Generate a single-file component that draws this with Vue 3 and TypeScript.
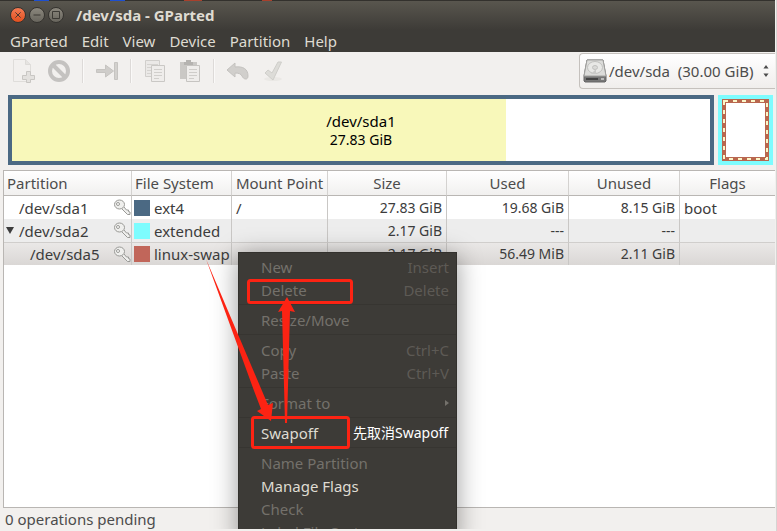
<script setup lang="ts">
interface Partition {
  name: string
  depth: number
  expander: boolean
  fs: string
  mount: string
  size: string
  used: string
  unused: string
  flags: string
}

interface MenuEntry {
  label: string
  accel?: string
  enabled?: boolean
  submenu?: boolean
}

const menus: string[] = ['GParted', 'Edit', 'View', 'Device', 'Partition', 'Help']

const columns: string[] = ['Partition', 'File System', 'Mount Point', 'Size', 'Used', 'Unused', 'Flags']

const partitions: Partition[] = [
  { name: '/dev/sda1', depth: 0, expander: false, fs: 'ext4', mount: '/', size: '27.83 GiB', used: '19.68 GiB', unused: '8.15 GiB', flags: 'boot' },
  { name: '/dev/sda2', depth: 0, expander: true, fs: 'extended', mount: '', size: '2.17 GiB', used: '---', unused: '---', flags: '' },
  { name: '/dev/sda5', depth: 1, expander: false, fs: 'linux-swap', mount: '', size: '2.17 GiB', used: '56.49 MiB', unused: '2.11 GiB', flags: '' },
]

const usedShare: string = `${(19.68 / 27.83) * 100}%`

const groups: MenuEntry[][] = [
  [{ label: 'New', accel: 'Insert' }, { label: 'Delete', accel: 'Delete' }],
  [{ label: 'Resize/Move' }],
  [{ label: 'Copy', accel: 'Ctrl+C' }, { label: 'Paste', accel: 'Ctrl+V' }],
  [{ label: 'Format to', submenu: true }],
  [{ label: 'Swapoff', enabled: true }],
  [{ label: 'Name Partition' }, { label: 'Manage Flags', enabled: true }, { label: 'Check' }, { label: 'Label File System' }],
]
</script>

<template>
  <div class="window">
    <header class="chrome">
      <div class="titlebar">
        <button class="knob close" aria-label="Close">
          <svg viewBox="0 0 16 16"><path d="M5 5l6 6M11 5l-6 6" /></svg>
        </button>
        <button class="knob" aria-label="Minimize">
          <svg viewBox="0 0 16 16"><path d="M4 8h8" /></svg>
        </button>
        <button class="knob" aria-label="Maximize">
          <svg viewBox="0 0 16 16"><path d="M4 4h8v8H4z" /></svg>
        </button>
        <h1>/dev/sda - GParted</h1>
      </div>
      <nav class="menubar">
        <button v-for="m in menus" :key="m">{{ m }}</button>
      </nav>
    </header>

    <div class="toolbar">
      <div class="tools">
        <button class="tool" aria-label="New partition" disabled>
          <svg viewBox="0 0 24 24">
            <path d="M1.5 .5h12l5 5v17h-17z" fill="#f2f0ee" stroke="#dfddda" />
            <path d="M13.500 .5v5h5" fill="#e6e4e1" stroke="#dddbd8" />
            <path d="M14.500 12.500h4v4h4v4h-4v3h-4v-3h-4v-4h4z" fill="#e3e1de" stroke="#c8c6c3" />
          </svg>
        </button>
        <button class="tool" aria-label="Delete partition" disabled>
          <svg viewBox="0 0 24 24">
            <circle cx="12" cy="12" r="9" fill="none" stroke="#c4c2c0" stroke-width="4" />
            <path d="M6 6l12 12" stroke="#c4c2c0" stroke-width="4" />
          </svg>
        </button>
        <span class="rule"></span>
        <button class="tool" aria-label="Resize or move" disabled>
          <svg viewBox="0 0 24 24">
            <path d="M1.5 10.500h9V6l8 6-8 6v-4.500h-9z" fill="#cfcdca" stroke="#c6c4c1" stroke-linejoin="round" />
            <path d="M19.500 3.500h3v17h-3z" fill="#d3d1ce" stroke="#c6c4c1" />
          </svg>
        </button>
        <span class="rule"></span>
        <button class="tool" aria-label="Copy" disabled>
          <svg viewBox="0 0 24 24">
            <path d="M2.500 1.500h14v16h-14z" fill="#ebe9e7" stroke="#d1cfcc" />
            <path d="M4 5.500h11M4 8.500h11M4 11.500h5M4 14.500h5" stroke="#d5d3d0" />
            <path d="M8.500 6.500h13v16h-13z" fill="#efedeb" stroke="#cac8c5" />
            <path d="M11 10.500h8M11 13.500h8M11 16.500h8M11 19.500h5" stroke="#d1cfcc" />
          </svg>
        </button>
        <button class="tool" aria-label="Paste" disabled>
          <svg viewBox="0 0 24 24">
            <path d="M2 3h17v17H2z" fill="#cac8c5" />
            <path d="M6 6V3h2V1h5v2h2v3z" fill="#b5b3b0" />
            <path d="M8.500 6.500h13v16h-13z" fill="#efedeb" stroke="#c6c4c1" />
            <path d="M11 10.500h8M11 13.500h8M11 16.500h8M11 19.500h5" stroke="#cfcdca" />
          </svg>
        </button>
        <span class="rule"></span>
        <button class="tool" aria-label="Undo" disabled>
          <svg viewBox="0 0 24 24">
            <path d="M1 11l8-7v4c8-1 13 2 13 9 0 2-1 3-2 3-2 0-3-1-4-3s-3-3-7-3v4z" fill="#d1cfcc" stroke="#c4c2bf" stroke-linejoin="round" />
          </svg>
        </button>
        <button class="tool" aria-label="Apply" disabled>
          <svg viewBox="0 0 24 24">
            <ellipse cx="12" cy="20" rx="9" ry="2" fill="#eae8e5" />
            <path d="M4 14l3-3 4 3 6-11h3.500L12 21z" fill="#dddcd8" stroke="#cfceca" stroke-linejoin="round" />
          </svg>
        </button>
      </div>
      <label class="device">
        <svg class="disk" viewBox="0 0 24 24" aria-hidden="true">
          <path d="M4 1h16l3 16v5l-1 1H2l-1-1v-5z" fill="#777" stroke="#666" />
          <path d="M4 1h16l3 16H1z" fill="#dcdcda" stroke="#a2a2a0" />
          <ellipse cx="12" cy="8.500" rx="7.500" ry="6" fill="#e8e8e6" stroke="#c0c0be" />
          <ellipse cx="12" cy="8.500" rx="2.500" ry="2" fill="#dadad8" stroke="#c0c0be" />
          <path d="M13 10l-5 5h5z" fill="#cacac8" />
          <path d="M3 20h12" stroke="#444" stroke-width="2" />
          <path d="M18 20h3" stroke="#bbb" stroke-width="2" />
        </svg>
        <select aria-label="Device">
          <option>/dev/sda&nbsp;&nbsp;(30.00 GiB)</option>
        </select>
        <svg class="spin" viewBox="0 0 6 14" aria-hidden="true"><path d="M0 4l3-4 3 4zM0 10l3 4 3-4z" fill="#4c4c4c" /></svg>
      </label>
    </div>

    <div class="map">
      <div class="block ext4">
        <div class="fill" :style="{ width: usedShare }"></div>
        <p><span>/dev/sda1</span><br />27.83 GiB</p>
      </div>
      <div class="block extended">
        <svg class="selected" viewBox="0 0 47 62" preserveAspectRatio="none" aria-hidden="true">
          <rect x="2" y="2" width="43" height="58" fill="#fff" stroke="#b9674e" stroke-width="4" />
          <rect x="2" y="2" width="43" height="58" fill="none" stroke="#fbf6c8" stroke-width="2" stroke-dasharray="4 5" />
        </svg>
      </div>
    </div>

    <main class="list">
      <table>
        <colgroup>
          <col class="c-part" /><col class="c-fs" /><col class="c-mount" /><col class="c-size" /><col class="c-used" /><col class="c-unused" /><col class="c-flags" />
        </colgroup>
        <thead>
          <tr><th v-for="c in columns" :key="c">{{ c }}</th></tr>
        </thead>
        <tbody>
          <tr v-for="p in partitions" :key="p.name" :class="{ chosen: p.depth === 1 }">
            <td>
              <div class="part" :class="{ child: p.depth === 1 }">
                <span class="expander"><svg v-if="p.expander" viewBox="0 0 8 7"><path d="M0 0h8L4 7z" fill="#3c3c3c" /></svg></span>
                <span class="dev">{{ p.name }}</span>
                <svg class="key" viewBox="0 0 17 17" aria-hidden="true">
                  <path d="M7.500 9.500l6 6h2.500V13l-1.500-.5v-1.500h-2L10 8" fill="#efefed" stroke="#999996" />
                  <ellipse cx="5.500" cy="5.500" rx="5" ry="4.500" fill="#efefed" stroke="#999996" />
                  <ellipse cx="4" cy="5" rx="1.500" ry="1.500" fill="#fff" stroke="#999996" />
                </svg>
              </div>
            </td>
            <td><div class="fs"><i :class="p.fs"></i>{{ p.fs }}</div></td>
            <td>{{ p.mount }}</td>
            <td class="num">{{ p.size }}</td>
            <td class="num">{{ p.used }}</td>
            <td class="num">{{ p.unused }}</td>
            <td>{{ p.flags }}</td>
          </tr>
        </tbody>
      </table>
    </main>

    <footer class="status">0 operations pending</footer>

    <div class="overlay">
      <div class="context" role="menu">
        <div v-for="(g, i) in groups" :key="i" class="group">
          <button v-for="e in g" :key="e.label" role="menuitem" :disabled="!e.enabled">
            <span>{{ e.label }}</span>
            <kbd v-if="e.accel">{{ e.accel }}</kbd>
            <svg v-if="e.submenu" viewBox="0 0 4 6"><path d="M0 0l4 3-4 3z" fill="#74716b" /></svg>
          </button>
        </div>
      </div>
      <svg class="marks" width="777" height="531" viewBox="0 0 777 531" aria-hidden="true">
        <g fill="none" stroke="#fc2313" stroke-width="3">
          <rect x="248.500" y="280.500" width="103" height="22" rx="2" />
          <rect x="252.500" y="417.500" width="96" height="30" rx="2" />
        </g>
        <g fill="#fc2313">
          <path d="M206 259L268 405L273 403L271 421L257 411L261 409L253 388Z" />
          <path d="M287 297L278 312L282 311L285 423L287 423L290 311L295 312Z" />
        </g>
      </svg>
      <p class="note">先取消Swapoff</p>
    </div>
  </div>
</template>

<style>
body {
  margin: 0;
  background: #fff;
}
</style>

<style scoped>
* {
  box-sizing: border-box;
}

.window {
  position: relative;
  display: flex;
  flex-direction: column;
  min-height: 100vh;
  padding: 0 1px 2px 0;
  border-right: 1px solid #d6d4d2;
  overflow: hidden;
  background: #f2f0ee;
  color: #3c3c3c;
  font: 15px/18px "Noto Sans", "Noto Sans CJK SC", sans-serif;
}

button {
  margin: 0;
  padding: 0;
  border: 0;
  background: none;
  color: inherit;
  font: inherit;
}

.chrome {
  height: 52px;
  padding-top: 1px;
  background:
    linear-gradient(90deg, #33312d 34px, #1d4fd0 34px 49px, #33312d 49px 110px, #1d4fd0 110px 125px, #33312d 125px 184px, #a8402c 184px 202px, #33312d 202px 262px, #a8402c 262px 272px, #33312d 272px) 0 0 / 100% 1px no-repeat,
    linear-gradient(#5a574f, #3d3b37 30px);
  color: #dfdbd2;
}

.titlebar {
  display: flex;
  align-items: center;
  gap: 3px;
  height: 28px;
  padding-left: 10px;
}

.knob {
  width: 16px;
  height: 16px;
  border: 1px solid #35332f;
  border-radius: 50%;
  background: linear-gradient(#8b877d, #68655d);
}

.knob.close {
  background: linear-gradient(#f47b54, #e2501f);
}

.knob svg {
  display: block;
  width: 14px;
  height: 14px;
  fill: none;
  stroke: #33312d;
  stroke-width: 1;
}

h1 {
  margin: 0 0 0 9px;
  font-size: 15px;
  line-height: 20px;
  font-weight: 700;
}

.menubar {
  display: flex;
  gap: 14px;
  padding: 1px 0 0 10px;
}

.menubar button {
  height: 22px;
}

.toolbar {
  display: flex;
  justify-content: space-between;
  height: 38px;
  padding-left: 12px;
}

.tools {
  display: flex;
  align-items: center;
  gap: 11px;
}

.tool {
  width: 24px;
  height: 24px;
}

.tool svg {
  display: block;
  width: 24px;
  height: 24px;
}

.rule {
  width: 2px;
  height: 24px;
  border-left: 1px solid #dddad8;
  background: #faf9f8;
}

.device {
  display: flex;
  align-items: center;
  gap: 2px;
  width: 196px;
  height: 36px;
  margin-top: 1px;
  padding: 0 6px 0 3px;
  border: 1px solid #c5c1bd;
  border-right: 0;
  border-radius: 4px 0 0 4px;
  background: linear-gradient(#fff, #f0eeec);
}

.disk {
  flex: none;
  width: 24px;
  height: 24px;
}

.device select {
  flex: 1;
  min-width: 0;
  padding: 0;
  border: 0;
  appearance: none;
  background: none;
  color: #4c4c4c;
  font: inherit;
  line-height: 20px;
}

.spin {
  flex: none;
  width: 6px;
  height: 12px;
}

.map {
  display: flex;
  gap: 4px;
  padding: 5px 2px 5px 8px;
}

.block {
  position: relative;
  height: 70px;
  border: 4px solid;
}

.ext4 {
  flex: 1;
  display: grid;
  border-color: #4b6983;
  background: #fff;
}

.fill {
  grid-area: 1 / 1;
  background: #f8f8ba;
}

.ext4 p {
  grid-area: 1 / 1;
  place-self: center;
  margin: 0;
  color: #000;
  font-size: 14px;
  text-align: center;
}

.ext4 span {
  font-size: 15px;
}

.extended {
  width: 55px;
  border-color: #7dfcfe;
}

.selected {
  display: block;
  width: 100%;
  height: 100%;
}

.list {
  flex: 1;
  margin-left: 3px;
  border: 1px solid #b9b6b3;
  border-width: 1px 0 1px 1px;
  background: #fff;
}

table {
  width: 100%;
  border-collapse: separate;
  border-spacing: 0;
  table-layout: fixed;
}

.c-part { width: 128px; }
.c-fs { width: 100px; }
.c-mount { width: 96px; }
.c-size { width: 119px; }
.c-used { width: 122px; }
.c-unused { width: 111px; }

th {
  height: 25px;
  padding: 0 3px;
  border-right: 1px solid #d4d2d0;
  border-bottom: 1px solid #b9b6b3;
  background: linear-gradient(#fff, #f1f0ef);
  color: #4c4c4c;
  font-weight: 400;
  text-align: center;
  white-space: nowrap;
}

th:first-child,
th:nth-child(2) {
  text-align: left;
}

td {
  height: 23px;
  padding: 0 4px;
  border-right: 1px solid #c9c7c5;
  white-space: nowrap;
}

td:first-child {
  padding: 0 0 0 2px;
}

td:nth-child(2) {
  padding: 0 2px;
}

th:last-child,
td:last-child {
  border-right: 0;
}

tbody tr:nth-child(2) td {
  background: #ededed;
}

.chosen td {
  border-top: 1px solid #d0cecc;
  background: linear-gradient(#eae8e7, #dad7d5);
}

.num {
  font-size: 14px;
  text-align: right;
}

.part,
.fs {
  display: flex;
  align-items: center;
}

.expander {
  width: 13px;
}

.child .expander {
  width: 24px;
}

.expander svg {
  display: block;
  width: 8px;
  height: 7px;
}

.dev {
  flex: 1;
}

.key {
  width: 17px;
  height: 17px;
}

.fs {
  gap: 4px;
}

.fs i {
  flex: none;
  width: 16px;
  height: 16px;
}

i.ext4 { background: #4b6983; }
i.extended { background: #7dfcfe; }
i.linux-swap { background: #c1665a; }

.status {
  height: 21px;
  padding-left: 5px;
  color: #4c4c4c;
  line-height: 22px;
}

.overlay {
  position: absolute;
  inset: 0 0 2px;
  overflow: hidden;
  pointer-events: none;
}

.context {
  position: absolute;
  left: 238px;
  top: 252px;
  width: 219px;
  padding-top: 2px;
  border: 1px solid #33312d;
  background: #3d3b37;
  box-shadow: 0 4px 24px rgba(0, 0, 0, 0.4);
  color: #dfdbd2;
  pointer-events: auto;
}

.group + .group {
  margin-top: 3px;
  padding-top: 3px;
  border-top: 1px solid #373531;
}

.context button {
  display: flex;
  align-items: center;
  justify-content: space-between;
  width: 100%;
  height: 23px;
  padding: 0 7px 0 22px;
}

.context button:disabled {
  color: #74716b;
}

kbd {
  color: #5d5a55;
  font: inherit;
}

.context button svg {
  width: 4px;
  height: 6px;
}

.marks {
  position: absolute;
  left: 0;
  top: 0;
}

.note {
  position: absolute;
  left: 353px;
  top: 424px;
  margin: 0;
  color: #fff;
  font-size: 14px;
  white-space: nowrap;
}
</style>
